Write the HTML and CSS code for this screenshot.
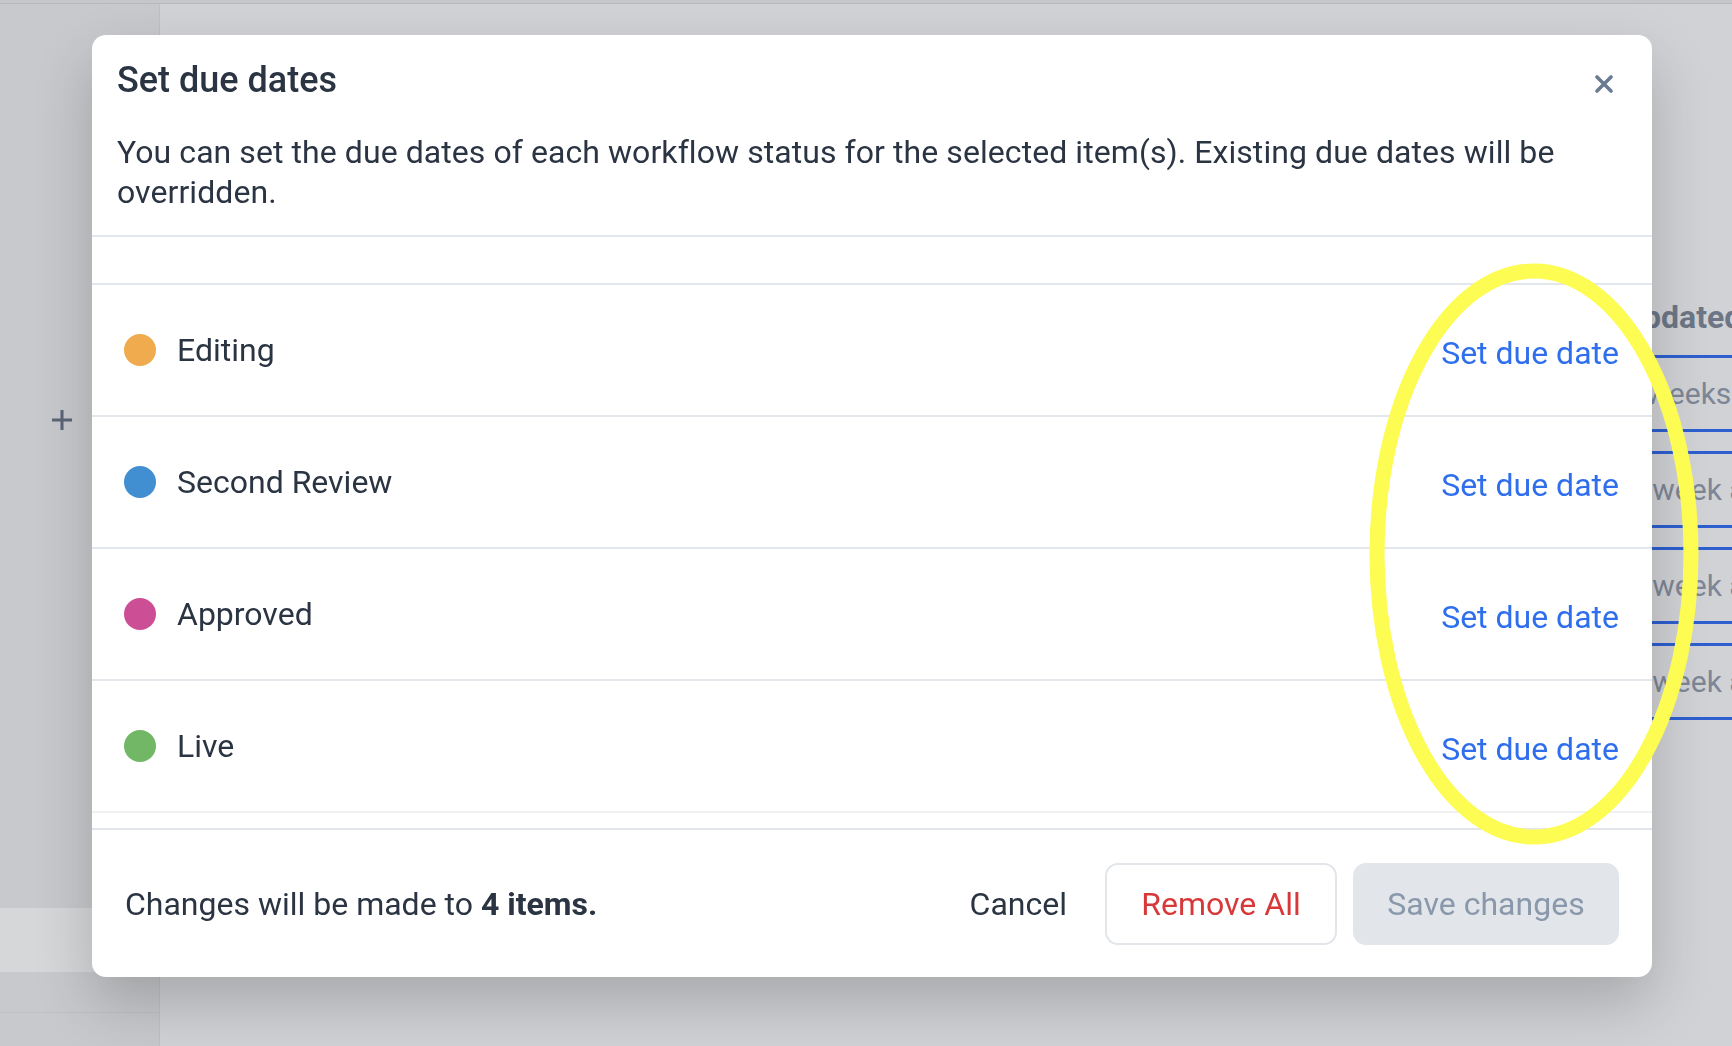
FILE: index.html
```html
<!DOCTYPE html>
<html>
<head>
	<meta charset="utf-8">
	<title>Set due dates</title>
	<link rel="stylesheet" href="styles.css">
</head>
<body>
	<div class="topbar"></div>
	<div class="layout">
		<aside class="sidebar">
			<svg class="side-add" width="24" height="24" viewBox="0 0 24 24">
				<path d="M12 2v20M2 12h20" stroke="#5b6577" stroke-width="3" fill="none"/>
			</svg>
			<div class="side-item"></div>
			<div class="side-row"></div>
		</aside>
		<main class="content">
			<div class="table-col">
				<div class="col-head">Updated</div>
				<div class="col-cell">2 weeks ago</div>
				<div class="col-cell shift">1 week ago</div>
				<div class="col-cell shift">1 week ago</div>
				<div class="col-cell shift">1 week ago</div>
			</div>
		</main>
	</div>

	<div class="overlay">
		<div class="modal">
			<div class="modal-head">
				<div class="title-row">
					<h2 class="title">Set due dates</h2>
					<button class="close" aria-label="Close">
						<svg width="18" height="18" viewBox="0 0 18 18">
							<path d="M2 2L16 16M16 2L2 16" stroke="#6b7b92" stroke-width="3.6" stroke-linecap="round"/>
						</svg>
					</button>
				</div>
				<p class="desc">You can set the due dates of each workflow status for the selected item(s). Existing due dates will be overridden.</p>
			</div>
			<div class="status-list">
				<div class="status">
					<span class="dot orange"></span>
					<span class="name">Editing</span>
					<a class="set-date" href="#">Set due date</a>
				</div>
				<div class="status">
					<span class="dot blue"></span>
					<span class="name">Second Review</span>
					<a class="set-date" href="#">Set due date</a>
				</div>
				<div class="status">
					<span class="dot pink"></span>
					<span class="name">Approved</span>
					<a class="set-date" href="#">Set due date</a>
				</div>
				<div class="status">
					<span class="dot green"></span>
					<span class="name">Live</span>
					<a class="set-date" href="#">Set due date</a>
				</div>
			</div>
			<div class="modal-foot">
				<span class="summary">Changes will be made to <b>4 items.</b></span>
				<button class="btn-cancel">Cancel</button>
				<button class="btn-remove">Remove All</button>
				<button class="btn-save" disabled>Save changes</button>
			</div>
		</div>
	</div>

	<svg class="marker" width="360" height="620" viewBox="0 0 360 620">
		<ellipse cx="180" cy="310" rx="157" ry="283" fill="none" stroke="#fdfc52" stroke-width="15"/>
	</svg>
</body>
</html>
```

FILE: styles.css
```css
*
{
	box-sizing: border-box;
}
html, body
{
	margin: 0;
	height: 100%;
}
body
{
	font-family: Roboto, "Noto Sans", sans-serif;
	background-color: #d1d2d5;
	color: #2b3442;
	overflow: hidden;
}

/* page behind the dialog */
.topbar
{
	height: 4px;
	background-color: #c6c7ca;
	border-bottom: 1px solid #b7b8bc;
}
.layout
{
	display: flex;
	height: 1042px;
}
.sidebar
{
	width: 160px;
	background-color: #c8c9cc;
	border-right: 1px solid #bec0c4;
	display: flex;
	flex-direction: column;
}
.side-add
{
	margin: 404px 0 0 50px;
}
.side-item
{
	margin-top: auto;
	height: 64px;
	background-color: #d6d7d9;
}
.side-row
{
	height: 41px;
	margin-bottom: 33px;
	border-bottom: 1px solid #c0c1c4;
}
.content
{
	flex: 1;
	display: flex;
	justify-content: flex-end;
	padding-top: 276px;
}
.table-col
{
	width: 110px;
	white-space: nowrap;
	font-size: 30px;
	color: #7d8696;
}
.col-head
{
	height: 75px;
	line-height: 75px;
	font-size: 32px;
	font-weight: 700;
	color: #6c7686;
}
.col-cell
{
	height: 77px;
	line-height: 71px;
	border-top: 3px solid #2d5fcf;
	border-bottom: 3px solid #2d5fcf;
	margin-bottom: 19px;
}
.col-cell.shift
{
	padding-left: 6px;
}

/* dialog */
.overlay
{
	position: fixed;
	inset: 0;
	padding: 35px 0 0 92px;
}
.modal
{
	width: 1560px;
	height: 942px;
	background-color: #ffffff;
	border-radius: 14px;
	box-shadow: 0 26px 60px rgba(0, 0, 0, 0.2);
	display: flex;
	flex-direction: column;
	overflow: hidden;
}
.modal-head
{
	padding: 24px 33px 23px 25px;
	border-bottom: 2px solid #e3e6ea;
}
.title-row
{
	display: flex;
	align-items: center;
	justify-content: space-between;
}
.title
{
	margin: 0;
	font-size: 36px;
	line-height: 43px;
	font-weight: 500;
}
.close
{
	border: none;
	background: none;
	padding: 0;
	margin: 6px 6px 0 0;
	display: flex;
}
.desc
{
	margin: 30px 0 0;
	font-size: 32px;
	line-height: 40px;
	letter-spacing: 0.07px;
}
.status-list
{
	padding: 46px 0 15px;
	border-bottom: 2px solid #e2e5e9;
}
.status
{
	height: 132px;
	display: flex;
	align-items: center;
	padding: 0 33px 0 32px;
	border-top: 2px solid #e3e6ea;
	font-size: 32px;
}
.status:last-child
{
	border-bottom: 2px solid #eff1f3;
	height: 134px;
}
.dot
{
	width: 32px;
	height: 32px;
	border-radius: 50%;
	margin-right: 21px;
}
.orange { background-color: #efab4d; }
.blue { background-color: #418ed0; }
.pink { background-color: #cc4f95; }
.green { background-color: #72b766; }
.set-date
{
	margin-left: auto;
	margin-top: 6px;
	color: #2f6fee;
	text-decoration: none;
}
.modal-foot
{
	flex: 1;
	display: flex;
	align-items: center;
	padding: 0 33px;
	font-size: 32px;
}
.summary
{
	margin-right: auto;
}
.modal-foot button
{
	font-family: inherit;
	font-size: 32px;
	height: 82px;
	border-radius: 13px;
}
.btn-cancel
{
	border: none;
	background: none;
	color: #2b3442;
	padding: 0 38px 0 0;
}
.btn-remove
{
	width: 232px;
	border: 2px solid #e2e5ea;
	background-color: #ffffff;
	color: #d7393a;
	margin-right: 16px;
}
.btn-save
{
	width: 266px;
	border: none;
	background-color: #e2e5ea;
	color: #8a98ab;
}

/* annotation drawn over the screenshot */
.marker
{
	position: fixed;
	left: 1354px;
	top: 244px;
}
```
